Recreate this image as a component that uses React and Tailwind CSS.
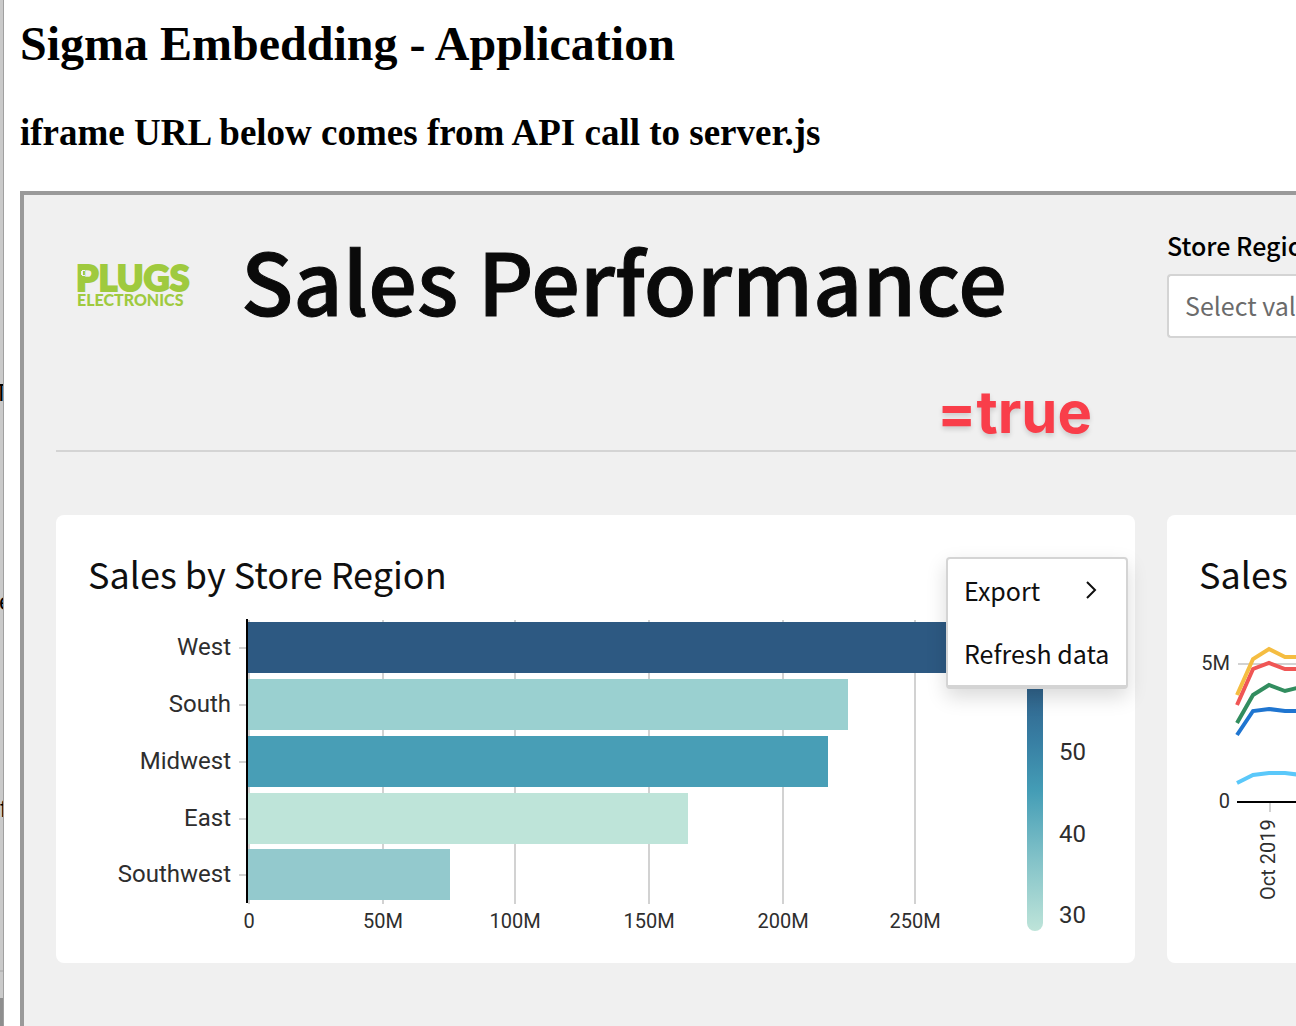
import React from "react";

const SANS = "font-['Noto_Sans_CJK_JP',sans-serif]";

const regions = [
  { name: "West", end: 983, y: 622, fill: "#2d5982" },
  { name: "South", end: 848, y: 679, fill: "#9ad0d0" },
  { name: "Midwest", end: 828, y: 736, fill: "#489eb6" },
  { name: "East", end: 688, y: 793, fill: "#bee4d9" },
  { name: "Southwest", end: 450, y: 849, fill: "#93c9cd" },
];

const ticks = [
  { x: 249, label: "0" },
  { x: 383, label: "50M" },
  { x: 515, label: "100M" },
  { x: 649, label: "150M" },
  { x: 783, label: "200M" },
  { x: 915, label: "250M" },
];

const legend = [
  { y: 760, label: "50" },
  { y: 842, label: "40" },
  { y: 923, label: "30" },
];

const lines = [
  { color: "#5ac8fa", points: "1237,783 1253,775 1269,773 1285,773 1301,775" },
  { color: "#1f75d0", points: "1237,735 1253,711 1269,709 1285,711 1301,711" },
  { color: "#328d5f", points: "1237,723 1253,695 1269,685 1285,691 1301,687" },
  { color: "#f05655", points: "1237,705 1253,669 1269,663 1285,669 1301,669" },
  { color: "#f5bd41", points: "1237,695 1253,659 1269,649 1285,657 1301,657" },
];

function BackgroundWindow() {
  return (
    <aside className="flex w-1 shrink-0 flex-col overflow-hidden border-r border-[#a0a0a0] bg-[#cacaca] font-['Liberation_Sans',sans-serif] text-2xl leading-7 text-black">
      <span className="mt-[379px] -ml-1.5">T</span>
      <span className="mt-[181px] -ml-px">e</span>
      <span className="mt-[179px]">f</span>
      <span className="mt-[147px] h-7 shrink-0 border-t-2 border-[#b8b8b8]" />
      <span className="flex-1 bg-[#8e8e8e]" />
    </aside>
  );
}

function Logo() {
  return (
    <svg viewBox="0 0 112 46" className="h-[46px] w-28 shrink-0 overflow-visible" role="img" aria-label="Plugs Electronics" fill="#9fca3e" stroke="#9fca3e" fontFamily="Lato, sans-serif" fontWeight="900">
      <text x="-1" y="29" fontSize="36" strokeWidth="2">PLUGS</text>
      <text x="0" y="44" fontSize="16" stroke="none">ELECTRONICS</text>
      <path d="M4 9h1v-1h3v1h-2v1h-2zM4 12h2v1h2v1h-3v-1h-1zM4 9h2v4h-2z" fill="#f0f0f0" stroke="none" />
    </svg>
  );
}

function BarChart() {
  return (
    <svg viewBox="88 612 1015 325" className="block w-full" role="img" aria-label="Sales by Store Region" fontFamily="Roboto, sans-serif" fill="#2e2e2e">
      <defs>
        <linearGradient id="scale" gradientUnits="userSpaceOnUse" x1="0" y1="690" x2="0" y2="931">
          <stop offset="0" stopColor="#31648c" />
          <stop offset="0.2" stopColor="#377da2" />
          <stop offset="0.42" stopColor="#449db6" />
          <stop offset="0.7" stopColor="#82c2c8" />
          <stop offset="1" stopColor="#bee4d9" />
        </linearGradient>
      </defs>
      {ticks.map((t) => (
        <g key={t.label}>
          <rect x={t.x - 1} y="620" width="2" height="284" fill="#d2d2d2" />
          <text x={t.x} y="928" textAnchor="middle" fontSize="20">{t.label}</text>
        </g>
      ))}
      {regions.map((r) => (
        <g key={r.name}>
          <rect x="239" y={r.y + 25} width="8" height="2" fill="#d2d2d2" />
          <rect x="248" y={r.y} width={r.end - 248} height="51" fill={r.fill} />
          <text x="231" y={r.y + 33} textAnchor="end" fontSize="24">{r.name}</text>
        </g>
      ))}
      <rect x="246" y="619" width="2" height="284" fill="#000" />
      <rect x="1027" y="640" width="16" height="291" rx="8" fill="url(#scale)" />
      {legend.map((l) => (
        <text key={l.label} x="1059" y={l.y} fontSize="24">{l.label}</text>
      ))}
    </svg>
  );
}

function LineChart() {
  return (
    <svg viewBox="1199 612 97 325" className="block h-[325px] w-[97px]" role="img" aria-label="Sales over time" fontFamily="Roboto, sans-serif" fill="#2e2e2e">
      <rect x="1238" y="663" width="60" height="2" fill="#d2d2d2" />
      <rect x="1269" y="802" width="2" height="10" fill="#d2d2d2" />
      {lines.map((l) => (
        <polyline key={l.color} points={l.points} fill="none" stroke={l.color} strokeWidth="4" />
      ))}
      <rect x="1237" y="801" width="60" height="2" fill="#000" />
      <text x="1230" y="670" textAnchor="end" fontSize="20">5M</text>
      <text x="1230" y="808" textAnchor="end" fontSize="20">0</text>
      <text transform="translate(1275 900) rotate(-90)" fontSize="20">Oct 2019</text>
    </svg>
  );
}

function ContextMenu() {
  return (
    <div className={`absolute top-[42px] right-[7px] flex w-[182px] flex-col rounded border-2 border-b-4 border-[#d4d4d4] bg-white text-[25px] leading-8 text-[#0f0f0f] shadow-[0_8px_20px_rgba(0,0,0,0.15)] ${SANS}`}>
      <button type="button" className="flex h-[62px] items-center justify-between pr-[29px] pl-4">
        Export
        <svg viewBox="0 0 12 20" className="h-5 w-3" fill="none" stroke="currentColor" strokeWidth="2">
          <path d="M2 2l8 8-8 8" />
        </svg>
      </button>
      <button type="button" className="flex h-16 items-center pl-4 whitespace-nowrap">Refresh data</button>
    </div>
  );
}

export default function App() {
  return (
    <div className="flex h-screen overflow-hidden bg-white">
      <BackgroundWindow />
      <main className="flex min-w-0 flex-1 flex-col pl-4 text-black">
        <h1 className="mt-4 font-['Liberation_Serif',serif] text-5xl leading-14 font-bold whitespace-nowrap">Sigma Embedding - Application</h1>
        <h2 className="mt-[39px] font-['Liberation_Serif',serif] text-[37px] leading-11 font-bold whitespace-nowrap">iframe URL below comes from API call to server.js</h2>
        <section className={`mt-9 flex-1 border-4 border-r-0 border-b-0 border-[#9a9a9a] bg-[#f0f0f0] pl-8 ${SANS}`}>
          <header className="relative flex h-[257px] items-start border-b-2 border-[#d4d4d4]">
            <div className="mt-[67px] ml-[21px] shrink-0"><Logo /></div>
            <h3 className="mt-9 ml-[52px] flex-1 text-[86px] leading-24 font-medium whitespace-nowrap text-[#0a0a0a] [-webkit-text-stroke:1px_#0a0a0a]">Sales Performance</h3>
            <div className="mt-[34px] w-[129px] shrink-0 overflow-hidden">
              <label htmlFor="store-region" className="block text-[25px] leading-8 font-medium whitespace-nowrap">Store Region</label>
              <input id="store-region" placeholder="Select values" className="mt-[13px] h-16 w-full rounded-l border-2 border-r-0 border-[#d4d4d4] bg-white pb-0.5 pl-4 text-[25px] placeholder:text-[#6b6b6b]" />
            </div>
            <span className="absolute right-[204px] bottom-0.5 font-['Inter',sans-serif] text-[58px] leading-[72px] font-bold text-[#f93e4a] [text-shadow:0_3px_5px_rgba(0,0,0,0.15)]">=true</span>
          </header>
          <div className="mt-[63px] flex gap-8">
            <article className="relative min-w-0 flex-1 rounded-lg bg-white px-8 pt-[34px] pb-[26px]">
              <h4 className="mb-[15px] text-4xl leading-12 whitespace-nowrap text-[#0f0f0f]">Sales by Store Region</h4>
              <BarChart />
              <ContextMenu />
            </article>
            <article className="w-[129px] shrink-0 overflow-hidden rounded-l-lg bg-white pt-[34px] pl-8">
              <h4 className="mb-[15px] text-4xl leading-12 whitespace-nowrap text-[#0f0f0f]">Sales</h4>
              <LineChart />
            </article>
          </div>
        </section>
      </main>
    </div>
  );
}
